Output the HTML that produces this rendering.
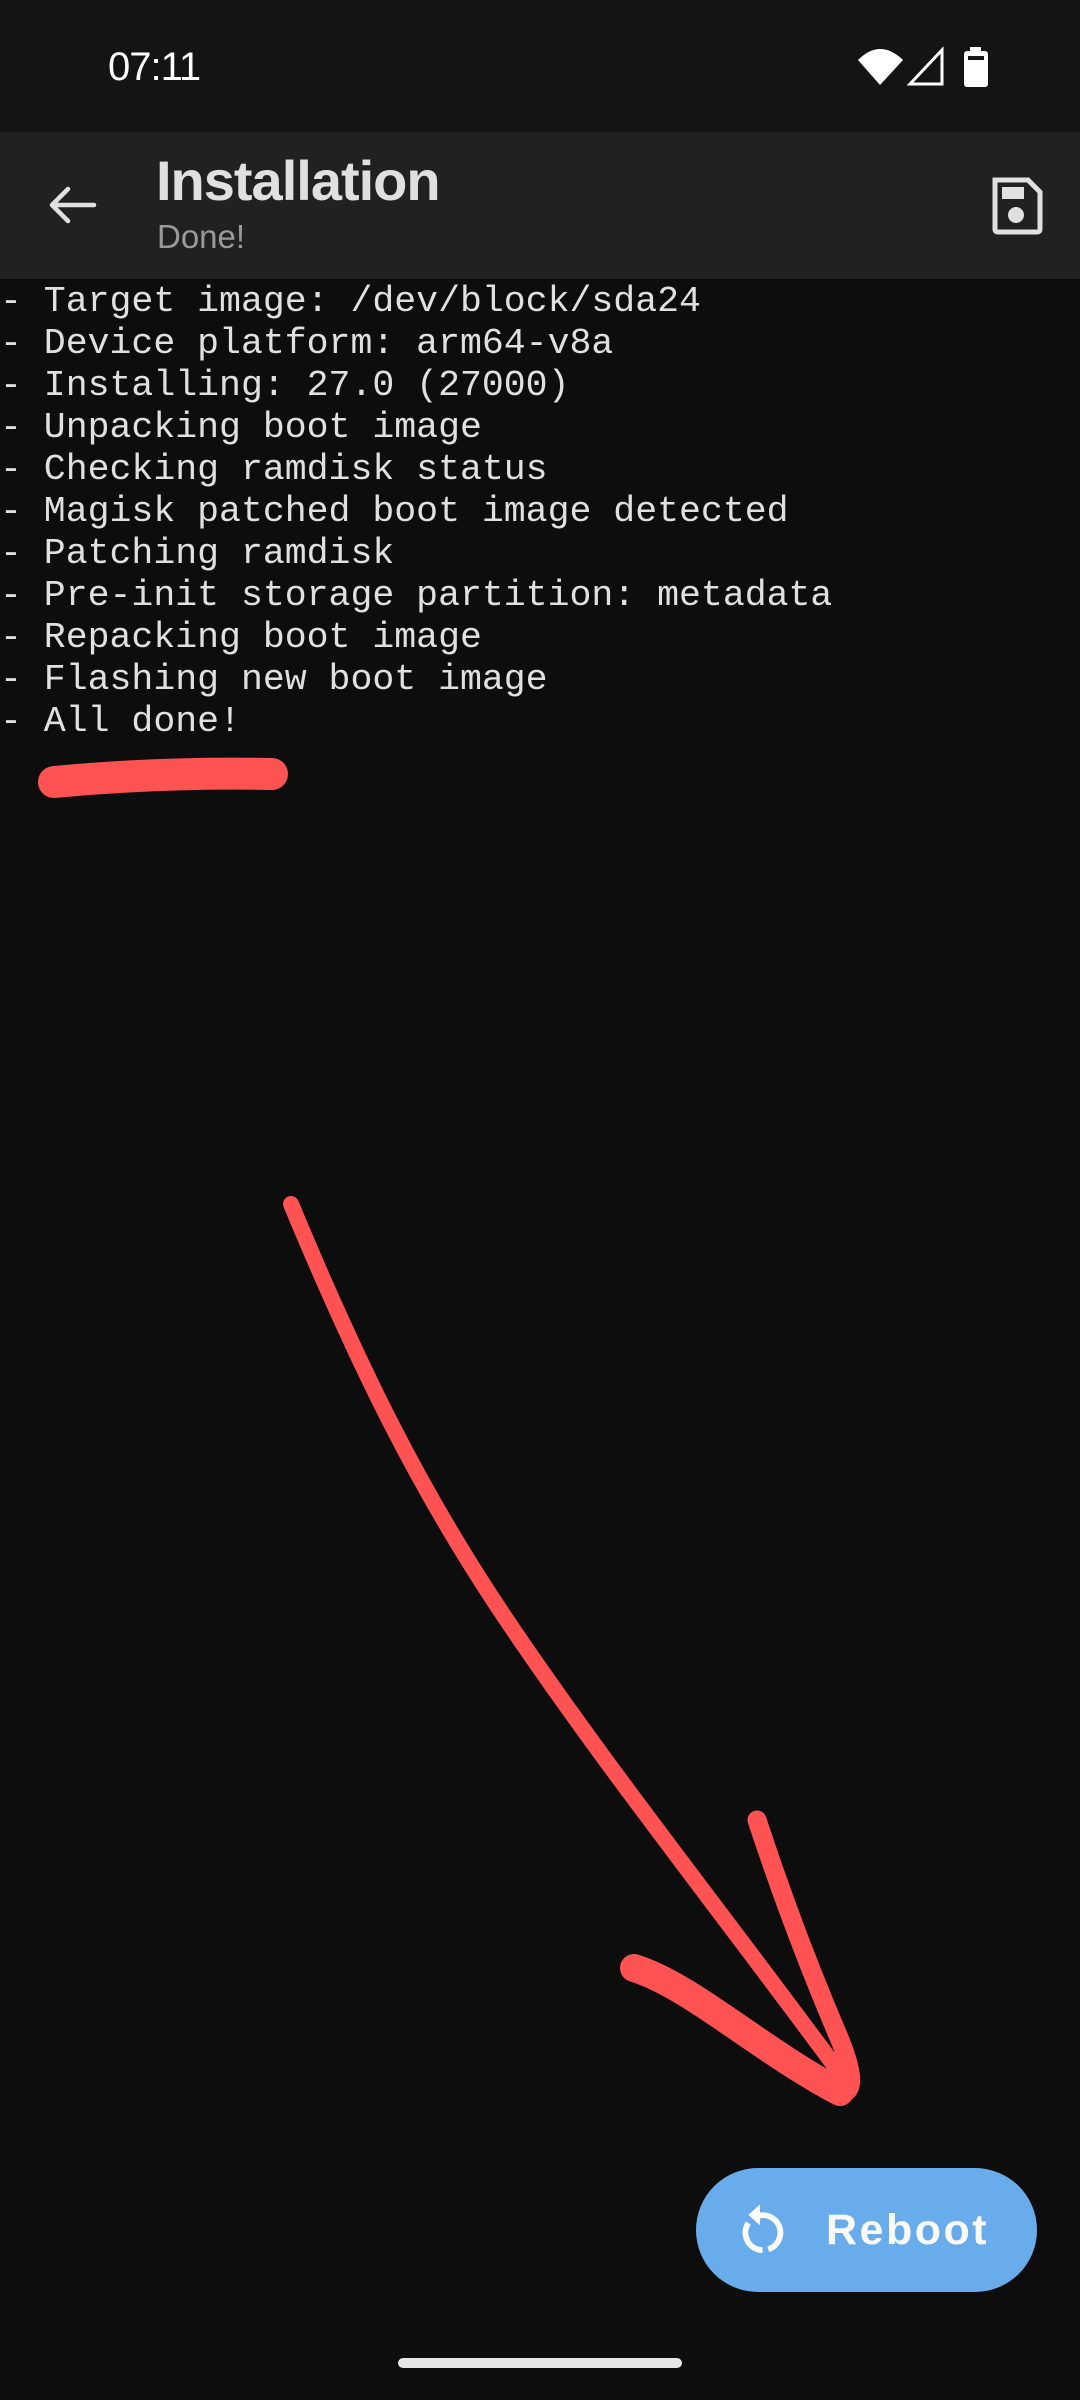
<!DOCTYPE html>
<html><head><meta charset="utf-8"><style>
html,body{margin:0;padding:0;width:1080px;height:2400px;background:#0d0d0d;overflow:hidden;position:relative;font-family:"Liberation Sans",sans-serif}
.sb{position:absolute;left:0;top:0;width:1080px;height:132px;background:#141414}
.time{position:absolute;left:108px;top:45px;font-size:40px;color:#fff;letter-spacing:-1px}
.ab{position:absolute;left:0;top:132px;width:1080px;height:147px;background:#212121}
.title{position:absolute;left:156px;top:148px;font-size:56px;font-weight:bold;color:#e0e0e0;letter-spacing:-1px}
.sub{position:absolute;left:157px;top:218px;font-size:33px;color:#9a9a9a}
.log{position:absolute;left:0;top:281px;font-family:"Liberation Mono",monospace;font-size:36.5px;line-height:42px;color:#e0e0e0;white-space:pre;letter-spacing:0}
.btn{position:absolute;left:696px;top:2168px;width:341px;height:124px;border-radius:62px;background:#68acec}
.btn span{position:absolute;left:130px;top:38px;font-size:43px;font-weight:bold;color:#fafafa;letter-spacing:2.5px}
.nav{position:absolute;left:398px;top:2358px;width:284px;height:10px;border-radius:5px;background:#e6e6e6}
</style></head><body>
<div class="sb"></div>
<div class="time">07:11</div>
<svg style="position:absolute;left:0;top:0" width="1080" height="132">
<path d="M858 60 Q880 38 903 60 L880 85 Z" fill="#fff"/>
<path d="M910 84 L942 50 L942 84 Z" fill="none" stroke="#fff" stroke-width="3"/>
<rect x="970" y="47" width="11" height="6" fill="#fff"/>
<rect x="964" y="51" width="24" height="36" rx="3" fill="#fff"/>
<rect x="968" y="56" width="16" height="4" fill="#141414"/>
</svg>
<div class="ab"></div>
<svg style="position:absolute;left:0;top:132px" width="1080" height="147">
<path d="M52 73 H94 M52 73 L68 57 M52 73 L68 89" stroke="#e0e0e0" stroke-width="4.5" fill="none" stroke-linecap="round"/>
<path d="M995 48 H1028 L1040 60 V97 Q1040 100 1037 100 H998 Q995 100 995 97 Z" fill="none" stroke="#e0e0e0" stroke-width="5"/>
<rect x="1002" y="55" width="22" height="12" fill="#e0e0e0"/>
<circle cx="1016" cy="83" r="8" fill="#e0e0e0"/>
</svg>
<div class="title">Installation</div>
<div class="sub">Done!</div>
<div class="log">- Target image: /dev/block/sda24
- Device platform: arm64-v8a
- Installing: 27.0 (27000)
- Unpacking boot image
- Checking ramdisk status
- Magisk patched boot image detected
- Patching ramdisk
- Pre-init storage partition: metadata
- Repacking boot image
- Flashing new boot image
- All done!</div>
<svg style="position:absolute;left:0;top:0" width="1080" height="2400">
<path d="M54 782 Q160 772 272 774" stroke="#ff5252" stroke-width="32" fill="none" stroke-linecap="round"/>
<path d="M291 1204 C360 1370 420 1490 500 1610 C600 1760 720 1910 845 2080" stroke="#ff5252" stroke-width="16" fill="none" stroke-linecap="round"/>
<path d="M757 1820 C780 1890 810 1970 840 2040 Q856 2080 848 2090" stroke="#ff5252" stroke-width="19" fill="none" stroke-linecap="round"/>
<path d="M634 1968 C690 1985 760 2050 840 2092" stroke="#ff5252" stroke-width="28" fill="none" stroke-linecap="round"/>
</svg>
<div class="btn"><span>Reboot</span>
<svg style="position:absolute;left:36px;top:34px" width="56" height="56" viewBox="0 0 48 48">
<path d="M14 18 A15 15 0 1 0 22 12" stroke="#fafafa" stroke-width="5" fill="none" stroke-dasharray="32 5 60"/>
<path d="M24 2 L24 20 L14 11 Z" fill="#fafafa"/>
</svg></div>
<div class="nav"></div>
</body></html>
